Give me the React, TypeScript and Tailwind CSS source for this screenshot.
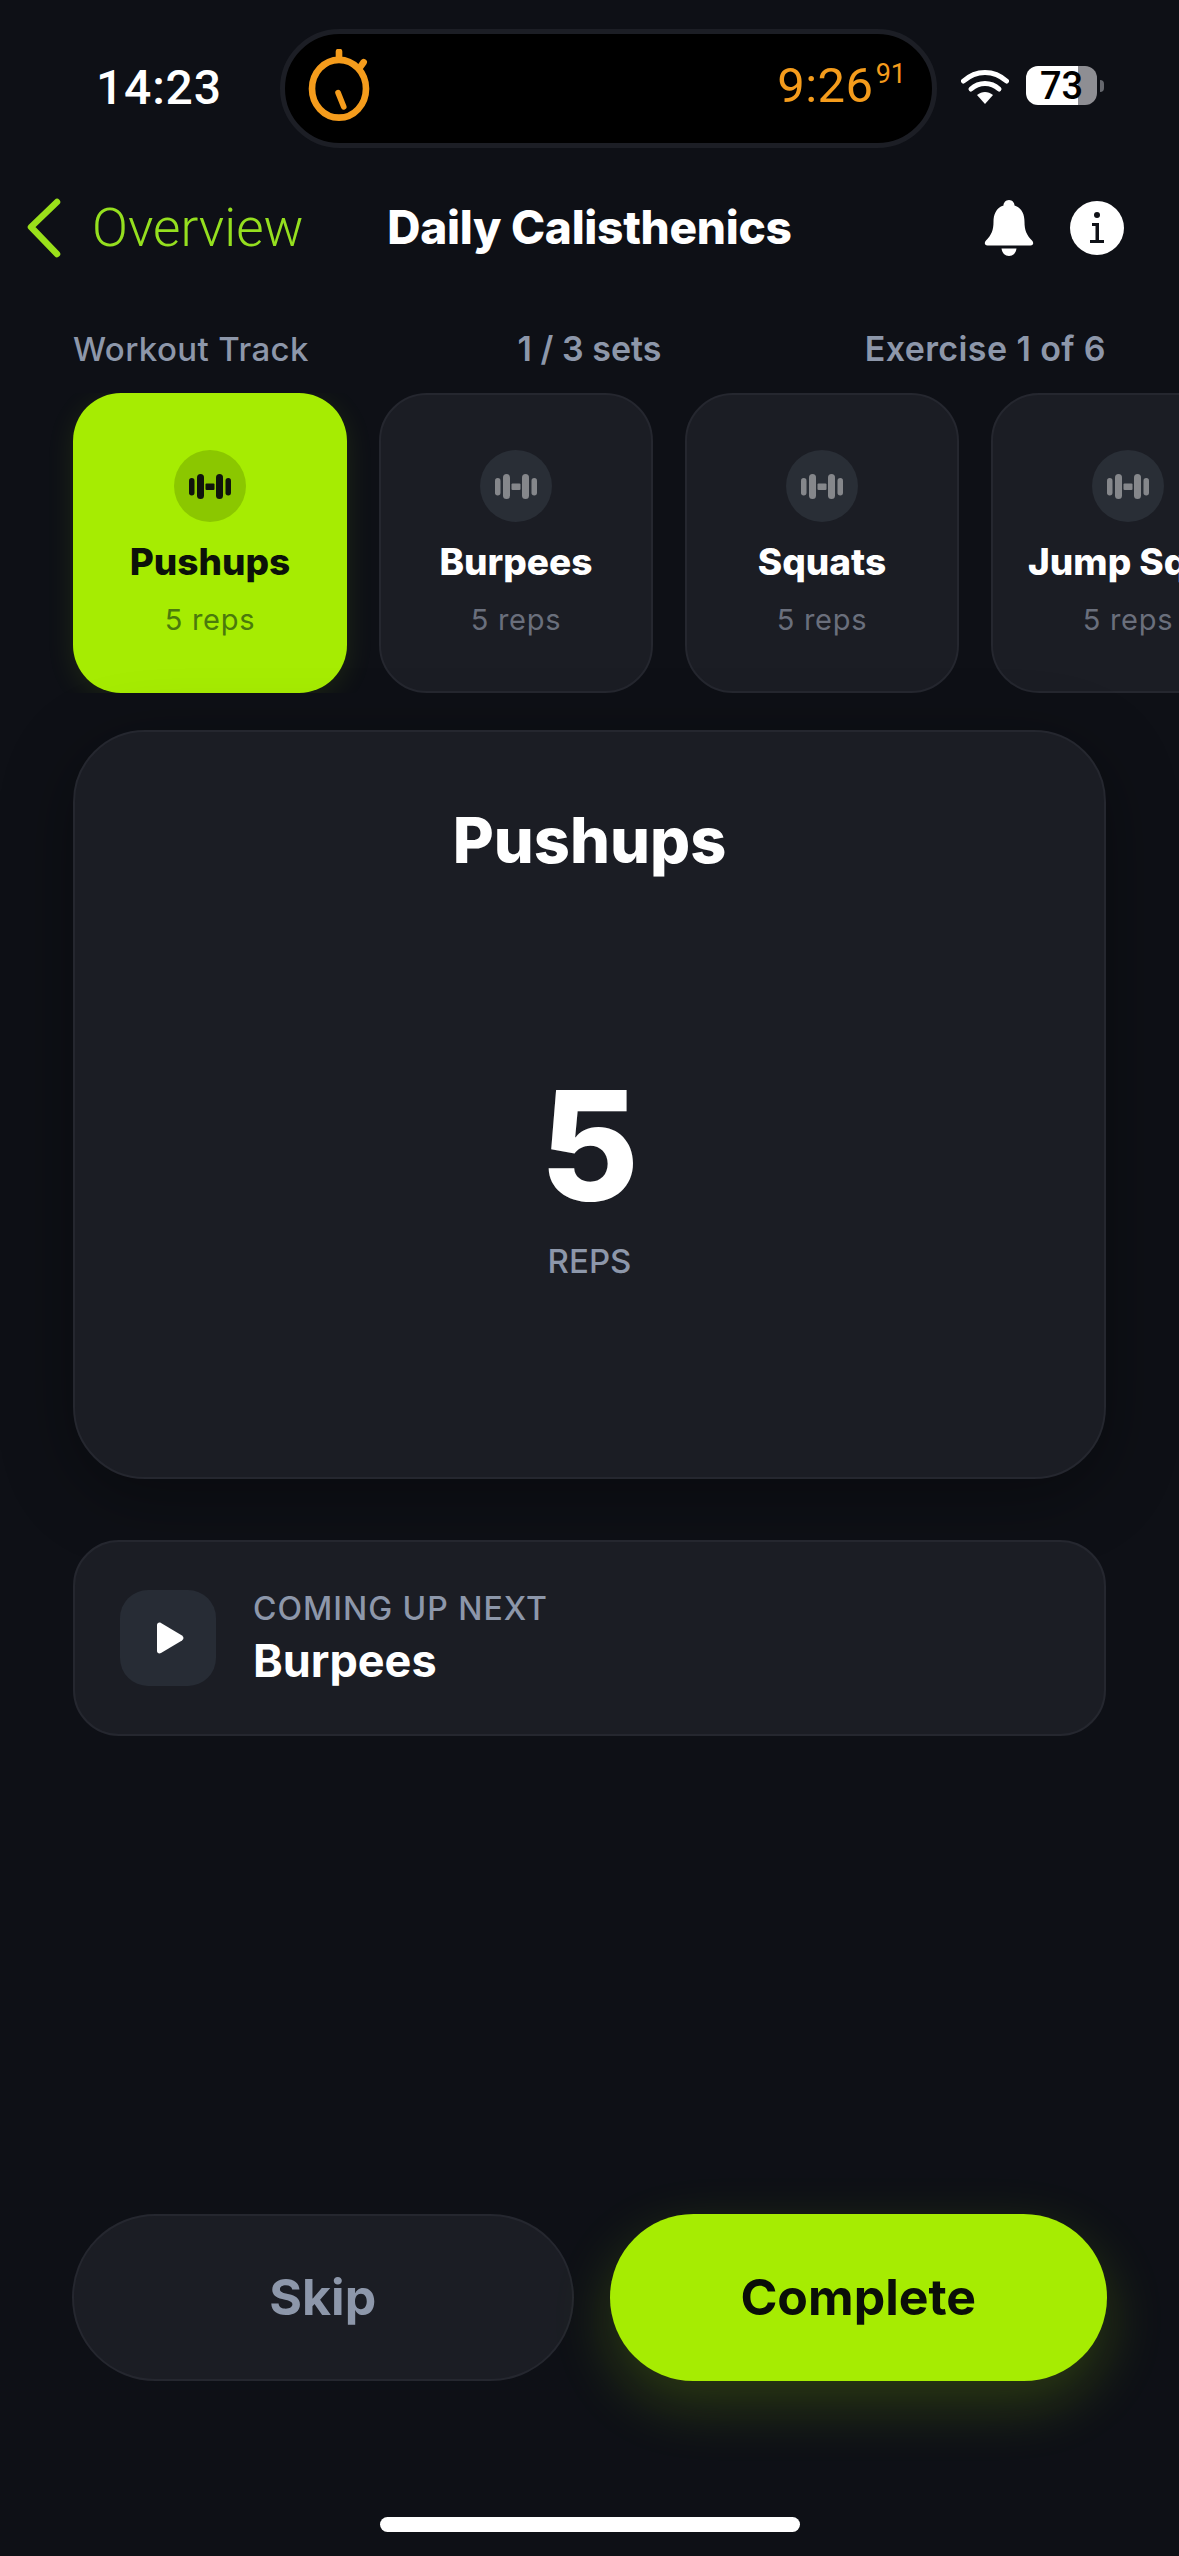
import React from "react";

function Dumbbell({ color }: { color: string }) {
  return (
    <svg width="42" height="25" viewBox="0 0 42 25" fill={color}>
      <rect x="0" y="4" width="5.5" height="17.5" rx="2.7" />
      <rect x="8" y="0" width="7" height="25" rx="3.5" />
      <rect x="16.5" y="9.5" width="9" height="6.5" rx="1" />
      <rect x="27" y="0" width="7" height="25" rx="3.5" />
      <rect x="36.5" y="4" width="5.5" height="17.5" rx="2.7" />
    </svg>
  );
}

function Track({ name, active }: { name: string; active?: boolean }) {
  return (
    <div
      className={
        active
          ? "w-[274px] h-[300px] shrink-0 rounded-[48px] bg-[#a6ec02] flex flex-col items-center pt-[57px] shadow-[0_6px_28px_rgba(166,237,0,0.1)]"
          : "w-[274px] h-[300px] shrink-0 rounded-[48px] bg-[#1b1d24] border-2 border-[#25272f] flex flex-col items-center pt-[55px]"
      }
    >
      <div
        className={
          active
            ? "w-[72px] h-[72px] rounded-full bg-[#8bc700] flex items-center justify-center"
            : "w-[72px] h-[72px] rounded-full bg-[#292e36] flex items-center justify-center"
        }
      >
        <Dumbbell color={active ? "#10140c" : "#85878b"} />
      </div>
      <div
        className={
          active
            ? "mt-[18px] max-w-[200px] truncate text-[37px] leading-[44px] font-extrabold whitespace-nowrap text-[#0c1209]"
            : "mt-[18px] max-w-[200px] truncate text-[37px] leading-[44px] font-extrabold whitespace-nowrap text-white"
        }
      >
        {name}
      </div>
      <div
        className={
          active
            ? "mt-[18px] text-[29px] leading-[36px] tracking-[0.7px] text-[#4a7a0c]"
            : "mt-[18px] text-[29px] leading-[36px] tracking-[0.7px] text-[#6a6f7c]"
        }
      >
        5 reps
      </div>
    </div>
  );
}

export default function App() {
  return (
    <div className="w-[1179px] h-[2556px] overflow-hidden bg-[#0e1016] text-white flex flex-col font-['Inter','Liberation_Sans',sans-serif]">
      {/* status bar */}
      <div className="mt-[29px] h-[119px] flex items-center pl-[96px] font-['Roboto',sans-serif]">
        <div className="w-[184px] text-[48px] leading-none tracking-[0.8px] mt-[-2px] font-medium">14:23</div>
        <div className="w-[657px] h-[119px] rounded-full bg-black border-[5px] border-[#1c1e25] flex items-center justify-between pl-[21px] pr-[26px]">
          <svg width="66" height="72" viewBox="0 0 68 76" fill="none" stroke="#f59c1c" className="mt-[-8px]">
            <ellipse cx="34" cy="42" rx="28.5" ry="30.5" strokeWidth="7" />
            <path d="M34 10V3" strokeWidth="7" strokeLinecap="round" />
            <path d="M55 21L60 14" strokeWidth="7" strokeLinecap="round" />
            <path d="M33 46L39 61" strokeWidth="6" strokeLinecap="round" />
          </svg>
          <div className="flex items-start text-[#f59c1c] mt-[-6px]">
            <span className="text-[49px] leading-[48px] tracking-[0.5px]">9:26</span>
            <span className="text-[27px] leading-[25px] ml-[2px]">91</span>
          </div>
        </div>
        <svg width="48" height="36" viewBox="0 0 48 36" fill="none" stroke="white" className="ml-[24px] mt-[-6px]">
          <path d="M2.5 13C15 1.5 33 1.5 45.500 13" strokeWidth="5" strokeLinecap="round" />
          <path d="M10 21C18 13.500 30 13.500 38 21" strokeWidth="5" strokeLinecap="round" />
          <path d="M16 27C21 23 27 23 32 27L24 36Z" fill="white" stroke="none" />
        </svg>
        <div className="ml-[17px] w-[71px] h-[39px] mt-[-6px] rounded-[12px] bg-[linear-gradient(90deg,#ffffff_73%,#8e8e93_73%)] flex items-center justify-center text-black text-[38px] leading-none font-medium">
          73
        </div>
        <div className="ml-[3px] mt-[-6px] w-[4px] h-[12px] rounded-r-full bg-[#66686e]" />
      </div>

      {/* nav */}
      <div className="mt-[50px] h-[60px] grid grid-cols-[1fr_auto_1fr] items-center px-[27px]">
        <div className="flex items-center">
          <svg width="36" height="60" viewBox="0 0 36 60" fill="none" stroke="#9ae01a" strokeWidth="6.500" strokeLinecap="round" strokeLinejoin="round">
            <path d="M30 4L4 29L30 56" />
          </svg>
          <span className="ml-[29px] text-[#95df1f] text-[53px] leading-none font-light font-['Roboto',sans-serif]">Overview</span>
        </div>
        <div className="text-[46px] leading-none font-extrabold tracking-[-0.3px] mt-[-2px]">Daily Calisthenics</div>
        <div className="flex items-center justify-end pr-[28px]">
          <svg width="50" height="56" viewBox="0 0 50 56" fill="white">
            <path d="M25 0C28.500 0 30.500 3 30.500 5.500C38 8 40.500 14.500 40.500 22C40.500 30 42.500 35 48 40.500C50 42.500 49.500 45.500 46.500 45.500H3.500C0.500 45.500 0 42.500 2 40.500C7.500 35 9.500 30 9.500 22C9.500 14.500 12 8 19.500 5.500C19.500 3 21.500 0 25 0Z" />
            <path d="M17.500 48.500H32.500C32 53 29 56 25 56C21 56 18 53 17.500 48.500Z" />
          </svg>
          <div className="ml-[36px] w-[54px] h-[54px] rounded-full bg-white flex items-center justify-center">
            <svg width="16" height="32" viewBox="0 0 16 32" fill="#0f1117">
              <circle cx="8" cy="3" r="3" />
              <path d="M3 11H10V28H15V31H1V28H6.500V14H3Z" />
            </svg>
          </div>
        </div>
      </div>

      {/* labels */}
      <div className="mt-[69px] px-[73px] grid grid-cols-[1fr_auto_1fr] items-center text-[#8d97aa] leading-[44px]">
        <div className="text-[33px] font-medium tracking-[0.4px]">Workout Track</div>
        <div className="text-[34px] font-semibold">1 / 3 sets</div>
        <div className="text-[34px] text-right font-semibold tracking-[0.4px]">Exercise 1 of 6</div>
      </div>

      {/* track */}
      <div className="mt-[22px] pl-[73px] flex gap-[32px] overflow-hidden">
        <Track name="Pushups" active />
        <Track name="Burpees" />
        <Track name="Squats" />
        <Track name="Jump Squats" />
      </div>

      {/* main */}
      <div className="mx-[73px] mt-[37px] h-[749px] rounded-[72px] bg-[#1b1d24] border-2 border-[#25272f] shadow-[0_16px_70px_rgba(0,0,0,0.35)] flex flex-col items-center">
        <div className="mt-[72px] text-[63px] leading-[72px] font-extrabold">Pushups</div>
        <div className="mt-[175px] text-[152px] leading-[190px] font-extrabold">5</div>
        <div className="text-[33px] leading-[40px] font-medium text-[#8d97aa]">REPS</div>
      </div>

      {/* next */}
      <div className="mx-[73px] mt-[61px] h-[196px] rounded-[46px] bg-[#1b1d24] border-2 border-[#25272f] flex items-center pl-[45px]">
        <div className="w-[96px] h-[96px] rounded-[28px] bg-[#272c35] flex items-center justify-center">
          <svg width="28" height="32" viewBox="0 0 28 32" fill="white" className="ml-[4px]">
            <path d="M1 3C1 1 3 0 5 1L26 13.500C28 15 28 17 26 18.500L5 31C3 32 1 31 1 29Z" />
          </svg>
        </div>
        <div className="ml-[37px] flex flex-col">
          <div className="text-[32px] leading-[40px] font-medium tracking-[1px] text-[#8d97aa]">COMING UP NEXT</div>
          <div className="mt-[5px] text-[45px] leading-[54px] font-bold">Burpees</div>
        </div>
      </div>

      {/* actions */}
      <div className="mt-auto ml-[72px] mr-[72px] flex gap-[36px]">
        <div className="flex-1 h-[167px] rounded-full bg-[#1b1d24] border-2 border-[#25272f] flex items-center justify-center text-[#8d97aa] text-[50px] font-bold">
          Skip
        </div>
        <div className="flex-1 h-[167px] rounded-full bg-[#a6ec02] shadow-[0_22px_60px_rgba(166,237,0,0.2)] flex items-center justify-center text-[#0a0f08] text-[50px] font-bold">
          Complete
        </div>
      </div>

      {/* home */}
      <div className="mt-[136px] mb-[24px] mx-auto w-[420px] h-[15px] rounded-full bg-white" />
    </div>
  );
}
